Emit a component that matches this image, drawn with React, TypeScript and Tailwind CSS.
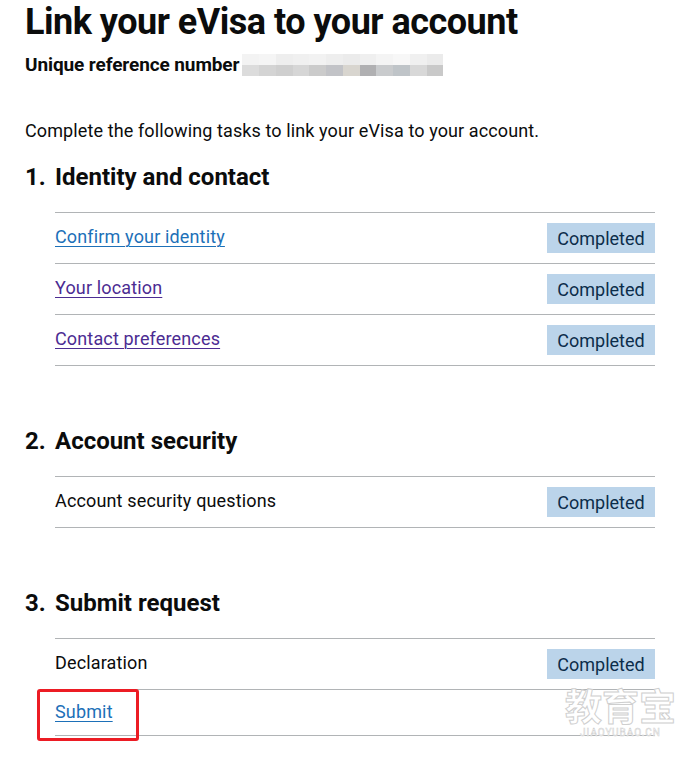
const font = { fontFamily: 'Roboto, "Noto Sans", sans-serif' }

type Task = { label: string; href?: boolean; visited?: boolean; status?: boolean }

const sections: { n: number; title: string; tasks: Task[]; mt: string }[] = [
  {
    n: 1,
    title: 'Identity and contact',
    mt: 'mt-[19px]',
    tasks: [
      { label: 'Confirm your identity', href: true, status: true },
      { label: 'Your location', href: true, visited: true, status: true },
      { label: 'Contact preferences', href: true, visited: true, status: true },
    ],
  },
  {
    n: 2,
    title: 'Account security',
    mt: 'mt-[60px]',
    tasks: [{ label: 'Account security questions', status: true }],
  },
  {
    n: 3,
    title: 'Submit request',
    mt: 'mt-[60px]',
    tasks: [{ label: 'Declaration', status: true }, { label: 'Submit', href: true }],
  },
]

const blur = [
  ['#f3f3f3', '#f5f5f5', '#eeeeee', '#f0f0f0', '#f2f2f2', '#eeeeee', '#ebebeb', '#efefef', '#f4f4f4', '#f7f7f7', '#f0f0f0', '#ebebeb'],
  ['#dcdcdc', '#d4d4d4', '#cfcfcf', '#d6d6d6', '#cbcbcb', '#c2c3c7', '#d8d5cf', '#b0b0b2', '#c9cbcd', '#bfc4c8', '#d8d8d8', '#c9c9c9'],
]

function Row({ task }: { task: Task }) {
  const color = task.visited ? 'text-[#4c2c92] decoration-[#4c2c92]' : 'text-[#1d70b8] decoration-[#1d70b8]'
  const isSubmit = task.label === 'Submit'
  return (
    <li
      className={`relative flex items-center justify-between border-b border-[#b1b4b6] ${isSubmit ? 'h-[46px]' : 'h-[51px]'}`}
    >
      {task.href ? (
        <a className={`${color} -mt-[3px] text-[18px] tracking-[0.15px] underline decoration-1 underline-offset-[3px]`}>{task.label}</a>
      ) : (
        <span className="-mt-[3px] text-[18px] tracking-[0.15px] text-[#0b0c0c]">{task.label}</span>
      )}
      {task.status && (
        <strong className="flex h-[30px] w-[108px] items-center justify-center bg-[#bbd4ea] text-[18px] font-normal text-[#0c2d4a]">
          Completed
        </strong>
      )}
      {isSubmit && (
        <div className="absolute left-[-18px] top-[-1px] h-[52px] w-[102px] rounded-[3px] border-[3px] border-[#ec1c24]" />
      )}
    </li>
  )
}

export default function App() {
  return (
    <div className="relative min-h-[757px] bg-white text-[#0b0c0c]" style={font}>
      <div className="w-[655px] pl-[25px]">
        <h1 className="pt-[1px] text-[36px] font-bold leading-[42px] tracking-[-0.5px]">Link your eVisa to your account</h1>

        <div className="mt-[10px] flex items-center">
          <span className="text-[19px] font-bold leading-[24px] tracking-[-0.1px]">Unique reference number</span>
          <div className="ml-[3px] flex flex-col">
            {blur.map((row, i) => (
              <div key={i} className="flex">
                {row.map((c, j) => (
                  <div key={j} className="h-[11px] w-[16.75px]" style={{ backgroundColor: c }} />
                ))}
              </div>
            ))}
          </div>
        </div>

        <p className="mt-[42px] text-[18px] leading-[24px] tracking-[0.11px]">Complete the following tasks to link your eVisa to your account.</p>

        {sections.map((s) => (
          <section key={s.n} className={s.mt}>
            <h2 className="flex text-[24px] font-bold leading-[30px]">
              <span className="w-[30px]">{s.n}.</span>
              <span>{s.title}</span>
            </h2>
            <ul className="ml-[30px] mt-[20px] border-t border-[#b1b4b6]">
              {s.tasks.map((t) => (
                <Row key={t.label} task={t} />
              ))}
            </ul>
          </section>
        ))}
      </div>

      <div className="pointer-events-none absolute left-[565px] top-[684px] flex flex-col items-center">
        <span
          className="text-[37px] font-bold leading-[42px] text-white [-webkit-text-stroke:1px_#cfcfcf]"
          style={{ fontFamily: '"Noto Sans CJK SC", sans-serif' }}
        >
          教育宝
        </span>
        <span className="text-[10px] leading-[14px] tracking-[1px] text-white [-webkit-text-stroke:0.5px_#cfcfcf]">JIAOYUBAO.CN</span>
      </div>
    </div>
  )
}
